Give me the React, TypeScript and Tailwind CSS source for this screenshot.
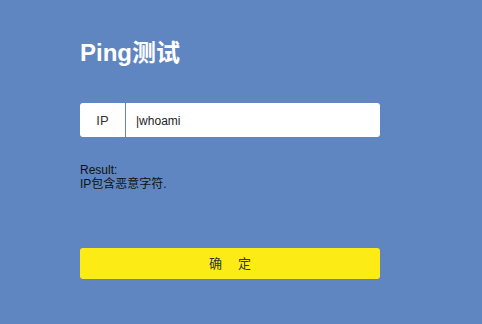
import React from "react";

export default function App() {
  return (
    <div
      className="w-[482px] h-[324px] bg-[#5f86c0] overflow-hidden"
      style={{ fontFamily: '"Liberation Sans", Arial, "Noto Sans CJK SC", sans-serif' }}
    >
      <div className="w-[300px] ml-[80px] pt-[39px] flex flex-col">
        <h1 className="text-[24px] leading-[28px] font-bold text-white">Ping测试</h1>
        <div className="mt-[36px] h-[34px] bg-white rounded-[3px] flex items-stretch">
          <div className="w-[46px] flex items-center justify-center pt-[2px] text-[13px] text-[#333] border-r border-[#5f86c0]">
            IP
          </div>
          <div className="flex-1 flex items-center pl-[10px] pt-[2px] text-[12px] text-[#222]">|whoami</div>
        </div>
        <div className="mt-[26px] text-[12px] leading-[14px] text-[#111]">
          <div>Result:</div>
          <div>IP包含恶意字符.</div>
        </div>
        <button className="mt-[57px] h-[31px] w-full bg-[#fdeb16] rounded-[3px] text-[13px] text-[#333] flex items-center justify-center">
          <span>确</span>
          <span className="ml-[16px]">定</span>
        </button>
      </div>
    </div>
  );
}
